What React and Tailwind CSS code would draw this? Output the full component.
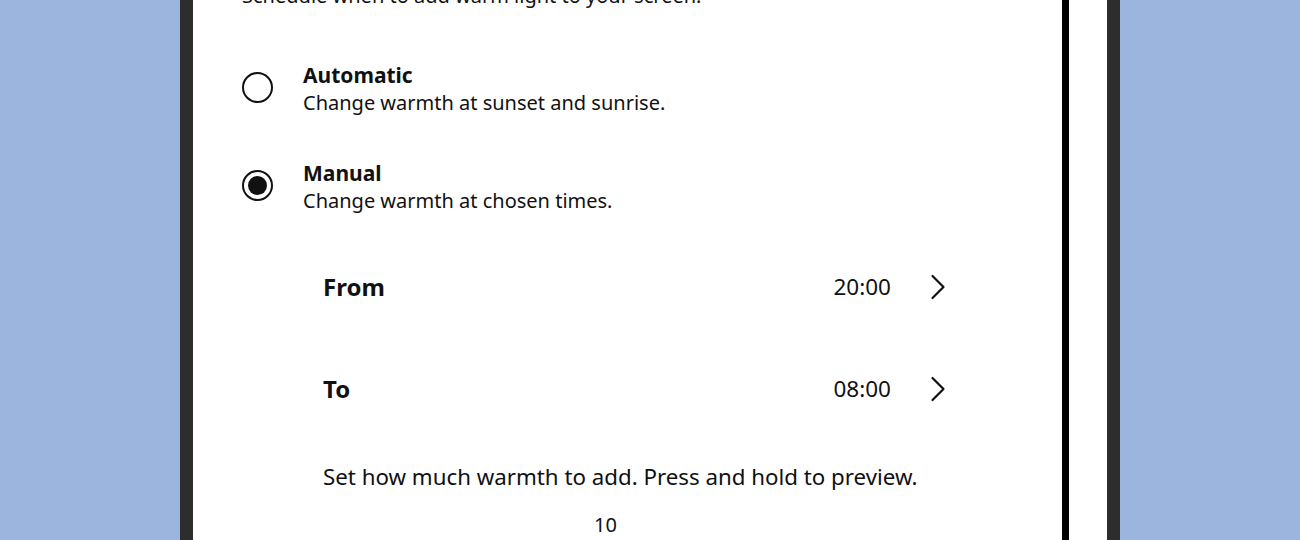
import React from "react";

const ui = { fontFamily: '"Noto Sans", "Open Sans", sans-serif' };

function Radio({ checked }) {
  return (
    <div className="w-[31px] h-[31px] rounded-full border-2 border-[#111] flex items-center justify-center shrink-0">
      {checked && <div className="w-[19px] h-[19px] rounded-full bg-[#111]" />}
    </div>
  );
}

function Chevron() {
  return (
    <svg width="16" height="26" viewBox="0 0 16 26" fill="none" className="shrink-0">
      <path d="M2.5 2 L13.5 13 L2.5 24" stroke="#111" strokeWidth="2.2" strokeLinecap="round" strokeLinejoin="round" />
    </svg>
  );
}

function Option({ title, desc, checked, className }) {
  return (
    <div className={"flex items-start " + className}>
      <div className="mt-[11px]">
        <Radio checked={checked} />
      </div>
      <div className="ml-[30px] flex flex-col">
        <div className="text-[21px] leading-[28px] font-bold text-[#111]">{title}</div>
        <div className="text-[20px] leading-[28px] text-[#111]">{desc}</div>
      </div>
    </div>
  );
}

function TimeRow({ label, value }) {
  return (
    <div className="h-[102px] flex items-center pl-[130px] pr-[116px]">
      <div className="text-[24px] font-bold text-[#111] flex-1">{label}</div>
      <div className="text-[22.5px] text-[#111] mr-[39px]">{value}</div>
      <Chevron />
    </div>
  );
}

export default function App() {
  return (
    <div className="w-[1300px] h-[540px] bg-[#9bb5df] overflow-hidden flex" style={ui}>
      <div className="w-[180px] shrink-0" />
      <div className="w-[13px] shrink-0 bg-[#2d2d2d]" />
      <div className="w-[869px] shrink-0 bg-white flex flex-col overflow-hidden">
        <div className="pl-[49px]">
          <p className="text-[20px] leading-[28px] text-[#111] mt-[-18px] whitespace-nowrap">
            Schedule when to add warm light to your screen.
          </p>
          <Option className="mt-[51px]" title="Automatic" desc="Change warmth at sunset and sunrise." />
          <Option className="mt-[42px]" title="Manual" desc="Change warmth at chosen times." checked />
        </div>
        <div className="mt-[21px]">
          <TimeRow label="From" value="20:00" />
          <TimeRow label="To" value="08:00" />
        </div>
        <p className="mt-[23px] pl-[130px] text-[22.3px] leading-[28px] text-[#111] whitespace-nowrap">
          Set how much warmth to add. Press and hold to preview.
        </p>
        <div className="mt-[20px] pl-[401px] text-[20px] leading-[28px] text-[#111]">
          10
        </div>
      </div>
      <div className="w-[7px] shrink-0 bg-black" />
      <div className="w-[38px] shrink-0 bg-white" />
      <div className="w-[13px] shrink-0 bg-[#2d2d2d]" />
      <div className="flex-1" />
    </div>
  );
}
